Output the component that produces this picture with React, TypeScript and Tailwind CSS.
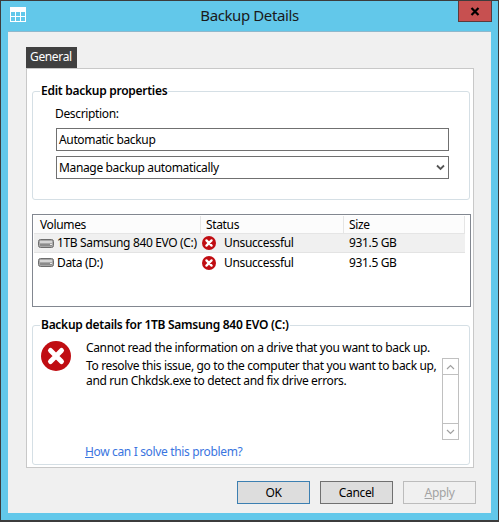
import React from 'react';

const ErrorBadge = ({ size }: { size: number }) => (
  <svg width={size} height={size} viewBox="0 0 30 30" className="shrink-0">
    <circle cx="15" cy="15" r="15" fill="#c00d12" />
    <path d="M9.5 9.5 L20.5 20.5 M20.5 9.5 L9.5 20.5" stroke="#fff" strokeWidth="5" strokeLinecap="round" />
  </svg>
);

const DriveIcon = () => (
  <svg width="16" height="9" viewBox="0 0 16 9" className="shrink-0">
    <rect x="0.5" y="0.5" width="15" height="8" rx="2" fill="#a8a8a8" stroke="#6e6e6e" />
    <rect x="2" y="2" width="12" height="2" fill="#d6d6d6" />
    <rect x="2" y="5" width="12" height="2" fill="#8c8c8c" />
    <rect x="12" y="5" width="2" height="1" fill="#e8e8e8" />
  </svg>
);

const Chevron = ({ up }: { up?: boolean }) => (
  <svg width="9" height="6" viewBox="0 0 9 6">
    <path d={up ? 'M1 5 L4.5 1.5 L8 5' : 'M1 1 L4.5 4.5 L8 1'} fill="none" stroke="#a0a0a0" strokeWidth="1.2" />
  </svg>
);

const rows = [
  { name: '1TB Samsung 840 EVO (C:)', selected: true },
  { name: 'Data (D:)', selected: false },
];

const App: React.FC = () => {
  return (
    <div className="w-[499px] h-[522px] bg-[#62c8ea] border border-[#3c3c3c] border-b-[2px] flex flex-col text-[12px] leading-[16px] tracking-[-0.35px] text-black font-['Noto_Sans',sans-serif] overflow-hidden">
      {/* Title bar */}
      <div className="h-[30px] flex items-start relative shrink-0">
        <svg width="16" height="15" viewBox="0 0 16 15" className="ml-[9px] mt-[6px]">
          <rect x="0.5" y="0.5" width="15" height="14" fill="none" stroke="#fff" />
          <rect x="0" y="0" width="16" height="5" fill="#fff" />
          <path d="M0 9.5 H16 M5.5 5 V15 M10.5 5 V15" stroke="#fff" />
        </svg>
        <div className="absolute inset-x-0 top-[4px] text-center text-[15px] leading-[20px] tracking-[-0.4px] text-[#1a1a1a]">Backup Details</div>
        <div className="absolute right-[6px] top-0 w-[34px] h-[21px] bg-[#c75050] border border-[#5c3a3a] border-t-0 flex items-center justify-center">
          <svg width="10" height="9" viewBox="0 0 10 9">
            <path d="M1.5 1 L8.5 8 M8.5 1 L1.5 8" stroke="#000" strokeWidth="2.2" />
          </svg>
        </div>
      </div>

      {/* Client area */}
      <div className="ml-[7px] mr-[7px] mb-[7px] flex-1 bg-[#f0f0f0] border-t border-[#8fb8cc] px-[18px] pt-[15px] flex flex-col">
        <div className="w-[51px] h-[21px] bg-[#404040] text-white pl-[4px] leading-[20px]">General</div>

        {/* Tab panel */}
        <div className="w-[448px] h-[400px] bg-white border border-[#c8c8c8] px-[5px] flex flex-col">
          {/* Edit group */}
          <div className="relative mt-[22px] w-[438px] h-[109px] border border-[#d5dfe5] rounded-[3px] pl-[23px] pr-[20px] flex flex-col shrink-0">
            <div className="absolute left-[7px] -top-[9px] bg-white px-px font-semibold leading-[16px] tracking-[-0.27px]">Edit backup properties</div>
            <div className="mt-[14px] h-[16px] -ml-px">Description:</div>
            <div className="mt-[6px] h-[23px] border border-[#707070] pl-[2px] leading-[21px]">Automatic backup</div>
            <div className="mt-[5px] h-[23px] border border-[#707070] pl-[2px] pr-[3px] leading-[21px] flex items-center justify-between">
              <span>Manage backup automatically</span>
              <svg width="9" height="7" viewBox="0 0 9 7">
                <path d="M1 1.5 L4.5 5 L8 1.5" fill="none" stroke="#555" strokeWidth="1.8" />
              </svg>
            </div>
          </div>

          {/* Volumes list */}
          <div className="mt-[14px] w-[439px] h-[93px] border border-[#828790] p-px pr-[5px] shrink-0">
            <div className="h-[18px] flex border-b border-[#e5e5e5] bg-[#fcfcfc]">
              <div className="w-[167px] pl-[6px] border-r border-[#e5e5e5] leading-[18px]">Volumes</div>
              <div className="w-[143px] pl-[5px] border-r border-[#e5e5e5] leading-[18px]">Status</div>
              <div className="flex-1 pl-[5px] border-r border-[#e5e5e5] leading-[18px]">Size</div>
            </div>
            {rows.map((row) => (
              <div key={row.name} className={`h-[19px] flex items-center ${row.selected ? 'bg-[#f0f0f0] border-b border-[#e3e3e3]' : 'bg-white'}`}>
                <div className="w-[167px] pl-[4px] flex items-center gap-[3px] whitespace-nowrap">
                  <DriveIcon />
                  <span>{row.name}</span>
                </div>
                <div className="w-[143px] pl-[1px] flex items-center gap-[8px]">
                  <ErrorBadge size={14} />
                  <span>Unsuccessful</span>
                </div>
                <div className="flex-1 pl-[5px]">931.5 GB</div>
              </div>
            ))}
          </div>

          {/* Details group */}
          <div className="relative mt-[18px] w-[438px] h-[140px] border border-[#d5dfe5] rounded-[3px] pl-[8px] flex shrink-0">
            <div className="absolute left-[7px] -top-[9px] bg-white px-px font-semibold leading-[16px] tracking-[-0.28px]">Backup details for 1TB Samsung 840 EVO (C:)</div>
            <div className="mt-[15px]">
              <ErrorBadge size={30} />
            </div>
            <div className="ml-[15px] flex-1 flex flex-col">
              <div className="mt-[14px] flex">
                <div className="w-[356px] shrink-0 leading-[15px]">
                  <p className="whitespace-nowrap">Cannot read the information on a drive that you want to back up.</p>
                  <p className="mt-[3px] whitespace-nowrap">To resolve this issue, go to the computer that you want to back up,</p>
                  <p className="whitespace-nowrap">and run Chkdsk.exe to detect and fix drive errors.</p>
                </div>
              </div>
              <div className="mt-auto mb-[4px] -ml-px text-[#3a75e0]">
                <span className="underline decoration-[#3a75e0]">H</span>ow can I solve this problem?
              </div>
            </div>
            {/* Scrollbar */}
            <div className="absolute left-[409px] top-[32px] w-[17px] h-[82px] border border-[#c0c0c0] flex flex-col justify-between">
              <div className="h-[16px] border-b border-[#c0c0c0] flex items-center justify-center"><Chevron up /></div>
              <div className="h-[16px] border-t border-[#c0c0c0] flex items-center justify-center"><Chevron /></div>
            </div>
          </div>
        </div>

        {/* Buttons */}
        <div className="mt-[13px] ml-[211px] flex gap-[10px]">
          <div className="w-[73px] shrink-0 h-[23px] bg-[#dddddd] border border-[#3c7fb1] text-center leading-[21px]">OK</div>
          <div className="w-[73px] shrink-0 h-[23px] bg-[#dddddd] border border-[#707070] text-center leading-[21px]">Cancel</div>
          <div className="w-[73px] shrink-0 h-[23px] bg-[#f0f0f0] border border-[#bcbcbc] text-center leading-[21px] text-[#a3a3a3]">
            <span className="underline">A</span>pply
          </div>
        </div>
      </div>
    </div>
  );
};

export default App;
